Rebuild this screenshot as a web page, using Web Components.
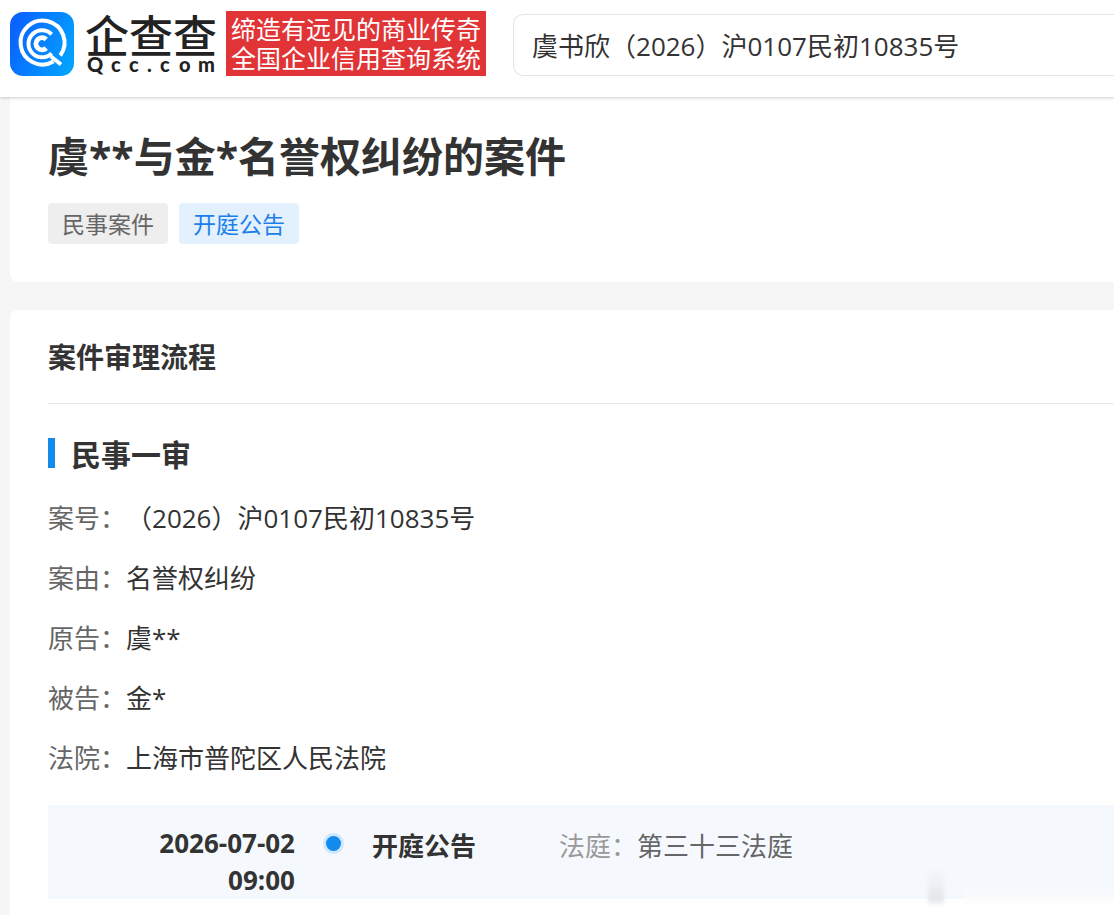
<!DOCTYPE html>
<html lang="zh-CN">
<head>
<meta charset="UTF-8">
<meta name="viewport" content="width=device-width, initial-scale=1">
<title>虞**与金*名誉权纠纷的案件 - 企查查</title>
<style>
  body {
    margin: 0;
    min-height: 100vh;
    display: flex;
    flex-direction: column;
    overflow-x: hidden;
    background-color: #f6f6f6;
    color: #333;
    font-family: "Open Sans", "Noto Sans CJK SC", sans-serif;
    font-size: 26px;
  }

  main {
    flex: 1;
    display: flex;
    flex-direction: column;
    gap: 28px;
    padding-left: 10px;
  }

  case-panel {
    flex: 1;
  }
</style>
</head>
<body>
  <app-header>
    <brand-logo></brand-logo>
    <brand-slogan>
      <span>缔造有远见的商业传奇</span>
      <span>全国企业信用查询系统</span>
    </brand-slogan>
    <search-box value="虞书欣（2026）沪0107民初10835号"></search-box>
  </app-header>

  <main>
    <case-summary>
      <span slot="title">虞**与金*名誉权纠纷的案件</span>
      <case-tag>民事案件</case-tag>
      <case-tag type="notice">开庭公告</case-tag>
    </case-summary>

    <case-panel>
      <span slot="title">案件审理流程</span>
      <case-stage>
        <span slot="title">民事一审</span>
        <case-field label="案号：">（2026）沪0107民初10835号</case-field>
        <case-field label="案由：">名誉权纠纷</case-field>
        <case-field label="原告：">虞**</case-field>
        <case-field label="被告：">金*</case-field>
        <case-field label="法院：">上海市普陀区人民法院</case-field>
      </case-stage>
      <timeline-entry>
        <span slot="date">2026-07-02</span>
        <span slot="time">09:00</span>
        <span slot="title">开庭公告</span>
        <span slot="label">法庭：</span>
        <span slot="value">第三十三法庭</span>
      </timeline-entry>
    </case-panel>
  </main>

<script>
class AppHeader extends HTMLElement {
  constructor() {
    super();
    this.shadowDOM = this.attachShadow({mode: 'open'});
  }

  connectedCallback() {
    this.render();
  }

  render() {
    this.shadowDOM.innerHTML = `
      <style>
        :host {
          display: block;
          position: relative;
          background-color: white;
          box-shadow: 0 1px 3px rgba(0, 0, 0, 0.2);
        }

        header {
          display: flex;
          align-items: center;
          padding: 11px 0 21px 10px;
        }
      </style>
      <header><slot></slot></header>
    `;
  }
}

class BrandLogo extends HTMLElement {
  constructor() {
    super();
    this.shadowDOM = this.attachShadow({mode: 'open'});
  }

  connectedCallback() {
    this.render();
  }

  render() {
    this.shadowDOM.innerHTML = `
      <style>
        :host {
          display: block;
          flex: none;
          margin-right: 8px;
        }

        a {
          display: flex;
          gap: 10px;
          color: #222;
          text-decoration: none;
        }

        svg {
          display: block;
          overflow: visible;
        }

        .name {
          font-size: 44px;
          font-weight: 500;
        }

        .domain {
          font-family: Lato, sans-serif;
          font-size: 20px;
          font-weight: 900;
        }
      </style>
      <a href="#" aria-label="企查查">
        <svg width="64" height="64" viewBox="0 0 64 64" fill="none" stroke="white" stroke-width="4">
          <defs>
            <linearGradient id="blue" x1="0" y1="0.3" x2="1" y2="0.7">
              <stop offset="0" stop-color="#0a62ff"/>
              <stop offset="1" stop-color="#02a2ff"/>
            </linearGradient>
          </defs>
          <rect width="64" height="64" rx="13" fill="url(#blue)" stroke="none"/>
          <path d="M43.5 49.6A22 22 0 1 1 50.3 43.5"/>
          <path d="M41 44.5L51 52.5"/>
          <path d="M41.6 22.3A13.5 13.5 0 1 0 41.6 41.3"/>
          <path d="M36.2 27.5A6 6 0 1 0 36.2 36.1" stroke-width="5"/>
        </svg>
        <svg width="134" height="64" viewBox="0 0 134 64" fill="currentColor">
          <text class="name" x="1" y="41">企查查</text>
          <text class="domain" x="3 27 45 63 76 95 114" y="60">Qcc.com</text>
        </svg>
      </a>
    `;
  }
}

class BrandSlogan extends HTMLElement {
  constructor() {
    super();
    this.shadowDOM = this.attachShadow({mode: 'open'});
  }

  connectedCallback() {
    this.render();
  }

  render() {
    this.shadowDOM.innerHTML = `
      <style>
        :host {
          display: flex;
          flex: none;
          flex-direction: column;
          padding: 4px 5px 3px;
          background-color: #e03437;
          color: white;
          font-size: 25px;
          font-weight: 400;
          line-height: 29px;
          white-space: nowrap;
        }
      </style>
      <slot></slot>
    `;
  }
}

class SearchBox extends HTMLElement {
  constructor() {
    super();
    this.shadowDOM = this.attachShadow({mode: 'open'});
  }

  connectedCallback() {
    this.render();
  }

  render() {
    this.shadowDOM.innerHTML = `
      <style>
        :host {
          display: block;
          flex: 1;
          min-width: 0;
          margin: 3px 0 0 27px;
        }

        input {
          display: block;
          box-sizing: border-box;
          width: 100%;
          height: 62px;
          padding: 0 18px;
          border: 1px solid #e4e4e4;
          border-right: none;
          border-radius: 10px 0 0 10px;
          outline: none;
          background-color: white;
          color: #333;
          font: inherit;
        }
      </style>
      <input type="text" aria-label="搜索">
    `;
    this.shadowDOM.querySelector('input').value = this.getAttribute('value');
  }
}

class CaseSummary extends HTMLElement {
  constructor() {
    super();
    this.shadowDOM = this.attachShadow({mode: 'open'});
  }

  connectedCallback() {
    this.render();
  }

  render() {
    this.shadowDOM.innerHTML = `
      <style>
        :host {
          display: block;
          padding: 31px 0 38px 38px;
          border-radius: 0 0 0 8px;
          background-color: white;
        }

        h1 {
          margin: 0 0 19px;
          font-size: 41px;
          line-height: 56px;
        }

        .tags {
          display: flex;
          gap: 11px;
        }
      </style>
      <h1><slot name="title"></slot></h1>
      <div class="tags"><slot></slot></div>
    `;
  }
}

class CaseTag extends HTMLElement {
  constructor() {
    super();
    this.shadowDOM = this.attachShadow({mode: 'open'});
  }

  connectedCallback() {
    this.render();
  }

  render() {
    this.shadowDOM.innerHTML = `
      <style>
        :host {
          display: block;
          padding: 2px 14px 0;
          border-radius: 4px;
          background-color: #eee;
          color: #666;
          font-size: 23px;
          line-height: 39px;
        }

        :host([type="notice"]) {
          background-color: #e2f1fd;
          color: #1d80e8;
        }
      </style>
      <slot></slot>
    `;
  }
}

class CasePanel extends HTMLElement {
  constructor() {
    super();
    this.shadowDOM = this.attachShadow({mode: 'open'});
  }

  connectedCallback() {
    this.render();
  }

  render() {
    this.shadowDOM.innerHTML = `
      <style>
        :host {
          display: block;
          padding: 0 0 16px 38px;
          border-radius: 8px 0 0 0;
          background-color: white;
        }

        h2 {
          margin: 0 0 34px;
          padding-top: 2px;
          border-bottom: 1px solid #e9e9e9;
          font-size: 28px;
          line-height: 91px;
        }
      </style>
      <h2><slot name="title"></slot></h2>
      <slot></slot>
    `;
  }
}

class CaseStage extends HTMLElement {
  constructor() {
    super();
    this.shadowDOM = this.attachShadow({mode: 'open'});
  }

  connectedCallback() {
    this.render();
  }

  render() {
    this.shadowDOM.innerHTML = `
      <style>
        :host {
          display: block;
          margin-bottom: 17px;
        }

        h3 {
          display: flex;
          gap: 16px;
          margin: 0 0 16px;
          font-size: 30px;
          line-height: 34px;
        }

        h3::before {
          content: "";
          width: 7px;
          height: 30px;
          background-color: #128bed;
        }
      </style>
      <h3><slot name="title"></slot></h3>
      <slot></slot>
    `;
  }
}

class CaseField extends HTMLElement {
  constructor() {
    super();
    this.shadowDOM = this.attachShadow({mode: 'open'});
  }

  connectedCallback() {
    this.render();
  }

  render() {
    this.shadowDOM.innerHTML = `
      <style>
        :host {
          display: flex;
          line-height: 60px;
        }

        .label {
          flex: none;
          color: #666;
        }
      </style>
      <span class="label">${this.getAttribute('label')}</span>
      <span><slot></slot></span>
    `;
  }
}

class TimelineEntry extends HTMLElement {
  constructor() {
    super();
    this.shadowDOM = this.attachShadow({mode: 'open'});
  }

  connectedCallback() {
    this.render();
  }

  render() {
    this.shadowDOM.innerHTML = `
      <style>
        :host {
          display: flex;
          position: relative;
          padding-top: 20px;
          background-color: #f5f9fe;
          line-height: 43px;
        }

        .when {
          display: flex;
          flex: none;
          flex-direction: column;
          width: 247px;
          font-weight: bold;
          line-height: 37px;
          text-align: right;
        }

        .dot {
          flex: none;
          width: 15px;
          height: 15px;
          margin: 11px 31px 0;
          border-radius: 50%;
          background-color: #128bed;
          box-shadow: 0 0 0 3px #cfe7fc;
        }

        .title {
          flex: none;
          width: 187px;
          font-weight: bold;
        }

        .court {
          color: #666;
        }

        .label {
          color: #999;
        }

        /* faded corner stamp */
        .stamp {
          position: absolute;
          right: 0;
          bottom: -4px;
          display: flex;
          align-items: flex-end;
          gap: 20px;
          filter: blur(2px);
        }

        .stamp::before {
          content: "";
          width: 16px;
          height: 34px;
          background: linear-gradient(transparent, #e2e4e6);
        }

        .stamp::after {
          content: "";
          width: 150px;
          height: 22px;
          background: linear-gradient(transparent, #fafbfc);
        }
      </style>
      <div class="when">
        <slot name="date"></slot>
        <slot name="time"></slot>
      </div>
      <span class="dot"></span>
      <div class="title"><slot name="title"></slot></div>
      <div class="court"><span class="label"><slot name="label"></slot></span><slot name="value"></slot></div>
      <div class="stamp" aria-hidden="true"></div>
    `;
  }
}

customElements.define('app-header', AppHeader);
customElements.define('brand-logo', BrandLogo);
customElements.define('brand-slogan', BrandSlogan);
customElements.define('search-box', SearchBox);
customElements.define('case-summary', CaseSummary);
customElements.define('case-tag', CaseTag);
customElements.define('case-panel', CasePanel);
customElements.define('case-stage', CaseStage);
customElements.define('case-field', CaseField);
customElements.define('timeline-entry', TimelineEntry);
</script>
</body>
</html>
